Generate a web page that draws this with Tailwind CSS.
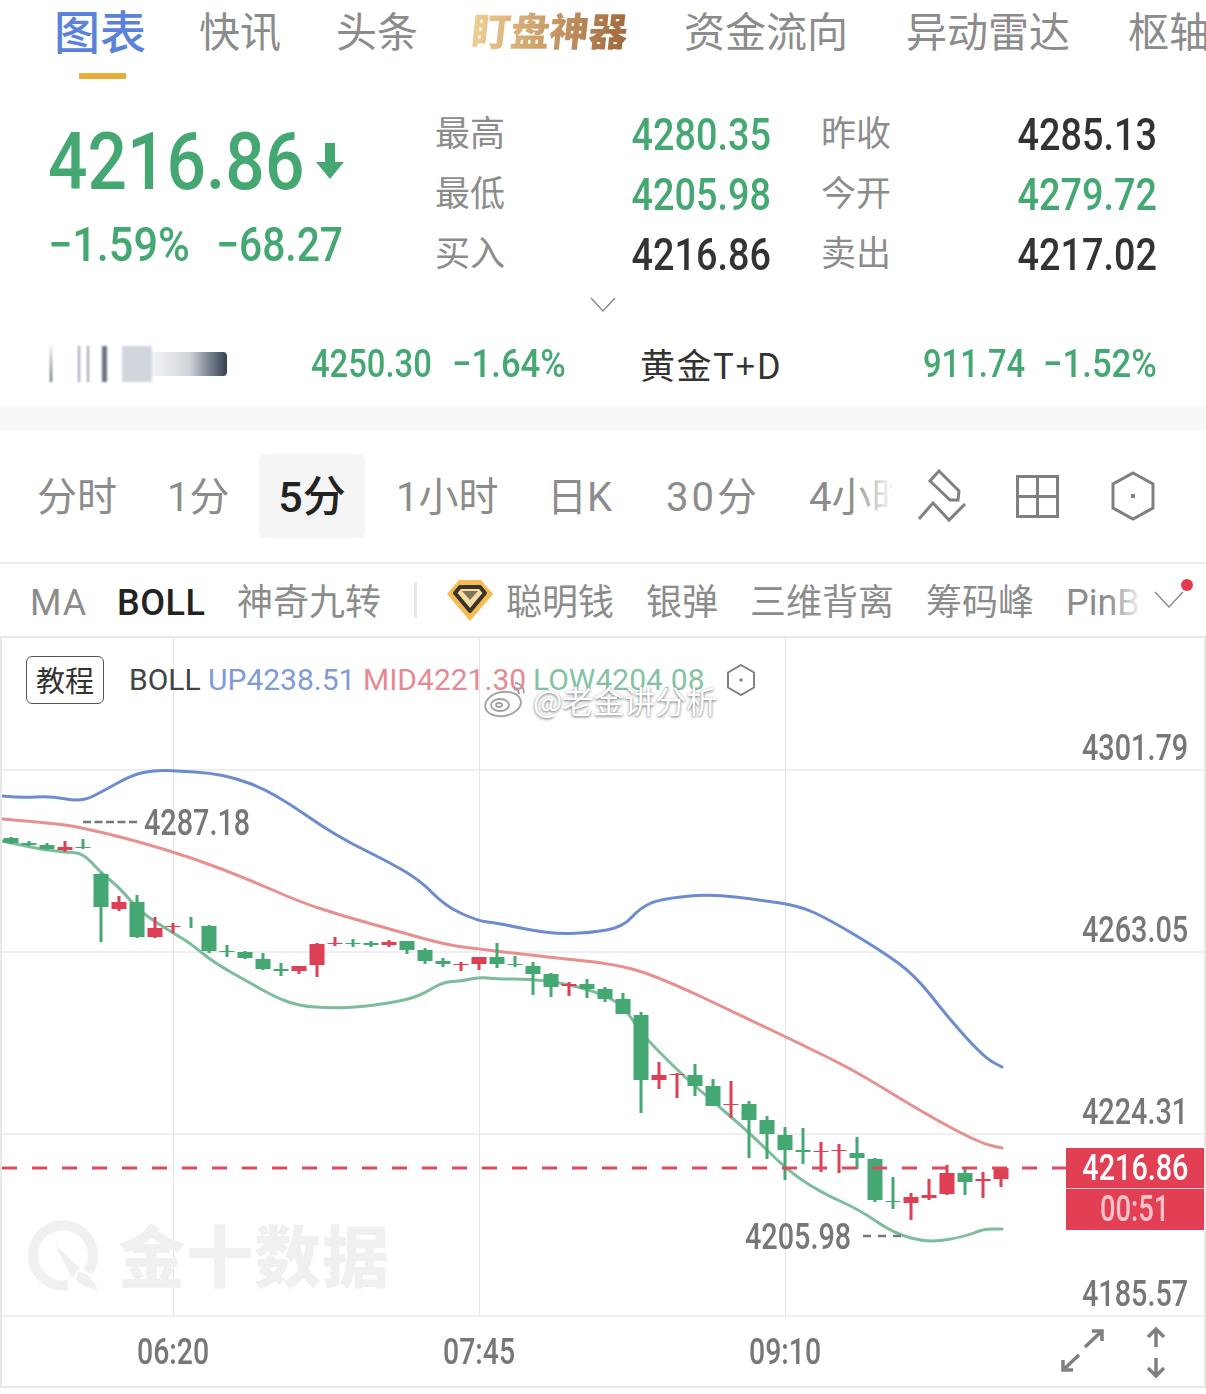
<!DOCTYPE html>
<html lang="zh-CN">
<head>
  <meta charset="UTF-8" />
  <meta name="viewport" content="width=device-width, initial-scale=1" />
  <title>Gold chart</title>
  <script src="https://cdn.jsdelivr.net/npm/@tailwindcss/browser@4"></script>
</head>
<body class="bg-white font-['Noto_Sans_CJK_SC','Noto_Sans',sans-serif] text-[#858585] w-[1206px] h-[1394px] overflow-hidden">

  <!-- Top tabs -->
  <nav class="h-[96px] pl-[54px] flex items-start pt-[2px] whitespace-nowrap overflow-hidden text-[41px] leading-[54px] text-[#8c8c8c]">
    <div class="relative w-[145px] shrink-0">
      <span class="text-[46px] font-medium text-[#5a82d8]">图表</span>
      <div class="absolute left-[25px] top-[71px] w-[47px] h-[6px] bg-[#e8ae3a]"></div>
    </div>
    <span class="w-[137px] shrink-0">快讯</span>
    <span class="w-[136px] shrink-0">头条</span>
    <span class="w-[155px] mr-[57px] shrink-0 text-[39px] font-black -skew-x-6 bg-linear-to-r from-[#efcf94] to-[#a2683c] bg-clip-text text-transparent">盯盘神器</span>
    <span class="w-[222px] shrink-0">资金流向</span>
    <span class="w-[222px] shrink-0">异动雷达</span>
    <span class="shrink-0">枢轴点</span>
  </nav>

  <!-- Quote -->
  <section class="h-[190px] flex pl-[50px] pt-[7px] text-[#45a873] font-['Roboto',sans-serif] font-medium">
    <div class="w-[385px] shrink-0">
      <div class="mt-[23px] h-[72px] flex items-center">
        <span class="ml-[-2px] w-[257px] text-[79px] leading-[72px] scale-x-[0.88] origin-left whitespace-nowrap">4216.86</span>
        <svg class="ml-[11px] mt-[-2px]" width="28" height="36" viewBox="0 0 28 36"><path d="M9 0h10v19h9L14 36 0 19h9z" fill="#45a873"/></svg>
      </div>
      <div class="mt-[25px] h-[44px] flex items-center text-[48px] whitespace-nowrap">
        <span class="ml-[-2px] w-[168px] shrink-0 scale-x-[0.9] origin-left">−1.59%</span><span class="scale-x-[0.85] origin-left">−68.27</span>
      </div>
    </div>
    <div class="grid grid-cols-[336px_336px] gap-x-[50px] auto-rows-[60px] items-center text-[45px]">
      <div class="flex justify-between items-center"><span class="mb-[4px] font-['Noto_Sans_CJK_SC'] font-normal text-[35px] text-[#8c8c8c]">最高</span><span class="mt-[4px] scale-x-[0.84] origin-right">4280.35</span></div>
      <div class="flex justify-between items-center"><span class="mb-[4px] font-['Noto_Sans_CJK_SC'] font-normal text-[35px] text-[#8c8c8c]">昨收</span><span class="mt-[4px] scale-x-[0.84] origin-right text-[#333333]">4285.13</span></div>
      <div class="flex justify-between items-center"><span class="mb-[4px] font-['Noto_Sans_CJK_SC'] font-normal text-[35px] text-[#8c8c8c]">最低</span><span class="mt-[4px] scale-x-[0.84] origin-right">4205.98</span></div>
      <div class="flex justify-between items-center"><span class="mb-[4px] font-['Noto_Sans_CJK_SC'] font-normal text-[35px] text-[#8c8c8c]">今开</span><span class="mt-[4px] scale-x-[0.84] origin-right">4279.72</span></div>
      <div class="flex justify-between items-center"><span class="mb-[4px] font-['Noto_Sans_CJK_SC'] font-normal text-[35px] text-[#8c8c8c]">买入</span><span class="mt-[4px] scale-x-[0.84] origin-right text-[#333333]">4216.86</span></div>
      <div class="flex justify-between items-center"><span class="mb-[4px] font-['Noto_Sans_CJK_SC'] font-normal text-[35px] text-[#8c8c8c]">卖出</span><span class="mt-[4px] scale-x-[0.84] origin-right text-[#333333]">4217.02</span></div>
    </div>
  </section>

  <!-- Chevron -->
  <div class="h-[48px] pl-[590px] pt-[11px]">
    <svg width="26" height="16" viewBox="0 0 26 16"><path d="M1 1l12 13L25 1" fill="none" stroke="#8a8a8a" stroke-width="1.5"/></svg>
  </div>

  <!-- Related quotes -->
  <div class="h-[72px] flex items-start pt-[12px] text-[#45a873] font-['Roboto',sans-serif] font-medium text-[39px] leading-[36px] whitespace-nowrap">
    <div class="ml-[50px] w-[180px] h-[36px] flex shrink-0">
      <div class="w-[2px] bg-linear-to-b from-gray-200 to-gray-600 blur-[1px]"></div>
      <div class="ml-[26px] w-[2px] bg-gray-400 blur-[1px]"></div>
      <div class="ml-[7px] w-[2px] bg-gray-400 blur-[1px]"></div>
      <div class="ml-[13px] w-[5px] bg-gray-500 blur-[1px]"></div>
      <div class="ml-[15px] w-[30px] bg-gray-300 blur-[1px]"></div>
      <div class="w-[75px] my-[6px] bg-linear-to-r from-gray-100 via-gray-300 to-gray-700 rounded-r-[4px]"></div>
    </div>
    <span class="ml-[81px] w-[141px] shrink-0 scale-x-[0.84] origin-left">4250.30</span>
    <span class="w-[188px] shrink-0 scale-x-[0.89] origin-left">−1.64%</span>
    <span class="w-[283px] shrink-0 font-['Noto_Sans_CJK_SC','Roboto'] font-normal text-[#333333] text-[35px] tracking-[1.5px]">黄金T+D</span>
    <span class="w-[120px] shrink-0 scale-x-[0.84] origin-left">911.74</span>
    <span class="scale-x-[0.89] origin-left">−1.52%</span>
  </div>

  <div class="h-[24px] bg-[#f7f7f7]"></div>

  <!-- Timeframes -->
  <div class="relative h-[134px] border-b-2 border-[#ececec] flex items-center whitespace-nowrap text-[40px] font-['Roboto','Noto_Sans_CJK_SC',sans-serif] text-[#8c8c8c]">
    <span class="mt-[3px] ml-[37px] w-[130px] shrink-0">分时</span>
    <span class="mt-[3px] w-[92px] shrink-0">1分</span>
    <span class="w-[106px] h-[84px] shrink-0 pt-[2px] flex items-center justify-center bg-[#f5f5f5] rounded-[6px] text-[#222222] text-[43px] font-medium">5分</span>
    <span class="mt-[3px] ml-[31px] w-[151px] shrink-0">1小时</span>
    <span class="mt-[3px] w-[119px] shrink-0">日K</span>
    <span class="mt-[3px] w-[143px] shrink-0 tracking-[3px]">30分</span>
    <span class="mt-[3px] w-[84px] shrink-0 overflow-hidden">4小时</span>
    <div class="absolute left-[850px] top-0 w-[45px] h-full bg-linear-to-r from-transparent to-white"></div>
    <svg class="ml-[24px] shrink-0" width="50" height="54" viewBox="917 468 50 54" fill="none" stroke="#808080" stroke-width="3">
      <path d="M939 470L930 480L950 499L958 499L959 490z"/>
      <path d="M919 518L933 502L949 519L965 503"/>
    </svg>
    <svg class="ml-[49px] shrink-0" width="43" height="43" viewBox="0 0 43 43" fill="none" stroke="#808080" stroke-width="3"><path d="M1.500 1.500h40v40h-40zM21.500 1.500v40M1.500 21.500h40"/></svg>
    <svg class="ml-[52px] shrink-0" width="44" height="50" viewBox="0 0 44 50" fill="none" stroke="#808080" stroke-width="3"><path d="M22 2l20 11v24L22 48 2 37V13z"/><rect x="20" y="23" width="4" height="4" fill="#808080" stroke="none"/></svg>
  </div>

  <!-- Indicators -->
  <div class="relative h-[74px] border-b-2 border-[#e8e8e8] flex items-center whitespace-nowrap text-[36px] font-['Roboto','Noto_Sans_CJK_SC',sans-serif] text-[#8c8c8c]">
    <span class="mt-[6px] ml-[30px] w-[87px] shrink-0 tracking-[1px]">MA</span>
    <span class="mt-[6px] w-[120px] shrink-0 font-medium tracking-[0.5px] text-[#222222]">BOLL</span>
    <span class="mt-[6px] w-[177px] shrink-0">神奇九转</span>
    <div class="w-[3px] h-[36px] bg-[#e8e8e8] shrink-0"></div>
    <svg class="ml-[30px] shrink-0" width="46" height="41" viewBox="0 0 46 41">
      <path d="M12 0h22l12 14-23 27L0 14z" fill="#f3bb52"/>
      <path d="M13 7h20l5 6-15 18L8 13z" fill="#f6dca0" stroke="#3a3328" stroke-width="4" stroke-linejoin="round"/>
      <path d="M15 11h16l-8 9z" fill="#7d7460"/>
    </svg>
    <span class="mt-[6px] ml-[13px] w-[140px] shrink-0">聪明钱</span>
    <span class="mt-[6px] w-[104px] shrink-0">银弹</span>
    <span class="mt-[6px] w-[176px] shrink-0">三维背离</span>
    <span class="mt-[6px] w-[140px] shrink-0">筹码峰</span>
    <span class="mt-[6px] w-[74px] shrink-0 overflow-hidden">PinBar</span>
    <div class="absolute left-[1108px] top-0 w-[36px] h-full bg-linear-to-r from-transparent to-white"></div>
    <svg class="ml-[14px] shrink-0" width="30" height="18" viewBox="0 0 30 18"><path d="M1 1l14 15L29 1" fill="none" stroke="#8a8a8a" stroke-width="1.5"/></svg>
    <div class="absolute left-[1181px] top-[15px] w-[12px] h-[12px] rounded-full bg-[#e23b50]"></div>
  </div>

  <!-- Chart -->
  <div class="relative h-[750px] border-x-2 border-[#e8e8e8] border-b-2 font-['Roboto',sans-serif] font-medium text-[#777777] overflow-hidden">
    <svg id="chart" class="absolute left-[-2px] top-0" width="1206" height="750" viewBox="0 638 1206 750" fill="none">
      <path d="M2 770H1204M2 952H1204M2 1134H1204M2 1316H1204" stroke="#efefef" stroke-width="2"/>
      <path d="M173.500 638V1316M479.500 638V1316M785.500 638V1316" stroke="#e4e4e4"/>
      <!-- watermark logo -->
      <path d="M88 1272A30 30 0 1 0 68 1285" stroke="#f0f0f0" stroke-width="10"/>
      <path d="M55 1245L80 1268L72 1278z" fill="#f0f0f0"/>
      <path d="M78 1272Q90 1272 98 1290Q80 1286 76 1280z" fill="#f0f0f0"/>
      <g id="lines" stroke-width="3" stroke-linejoin="round" stroke-linecap="round"></g>
      <g id="candles"></g>
      <path d="M2 1168H1066" stroke="#dd4a5d" stroke-width="3" stroke-dasharray="15 15"/>
      <path d="M83 822H138" stroke="#777777" stroke-width="2.500" stroke-dasharray="8 3.500"/>
      <path d="M863 1236H905" stroke="#777777" stroke-width="2.500" stroke-dasharray="8 7"/>
      <!-- bottom icons -->
      <g stroke="#808080" stroke-width="3.500">
        <path d="M1085 1347l17-16M1092 1331h10v10M1079 1355l-16 15M1063 1360v10h10"/>
        <path d="M1156 1329v18M1148 1337l8-8 8 8M1156 1358v18M1148 1368l8 8 8-8"/>
      </g>
    </svg>

    <!-- BOLL legend -->
    <div class="absolute left-[24px] top-[18px] w-[78px] h-[48px] border border-[#555555] rounded-[6px] flex items-center justify-center font-['Noto_Sans_CJK_SC'] font-normal text-[29px] text-[#333333]">教程</div>
    <div class="absolute left-[127px] top-[20px] flex items-center h-[42px] whitespace-nowrap font-['Roboto'] font-normal text-[30px]">
      <span class="w-[79px] text-[#444444]">BOLL</span>
      <span class="w-[155px] text-[#7f9bd3]">UP4238.51</span>
      <span class="w-[170px] text-[#e58a92]">MID4221.30</span>
      <span class="w-[194px] text-[#84c2a3]">LOW4204.08</span>
      <svg class="mt-[2px]" width="28" height="32" viewBox="0 0 28 32" fill="none" stroke="#808080" stroke-width="2"><path d="M14 1l13 7.500v15L14 31 1 23.500v-15z"/><rect x="12.500" y="14.500" width="3" height="3" fill="#808080" stroke="none"/></svg>
    </div>

    <!-- weibo watermark -->
    <svg class="absolute left-[481px] top-[40px]" width="46" height="40" viewBox="0 0 46 40" fill="none" stroke="#a0a0a0" stroke-width="1.800">
      <ellipse cx="20" cy="26" rx="18" ry="12" transform="rotate(-10 20 26)" fill="#ffffff"/>
      <ellipse cx="17" cy="27" rx="9" ry="6" fill="#ffffff"/>
      <ellipse cx="16" cy="27" rx="3" ry="2"/>
      <path d="M32 5c5 0 9 4 9 10M31 11c3 0 5 2 5 5"/>
    </svg>
    <div class="absolute left-[531px] top-[40px] h-[44px] leading-[44px] whitespace-nowrap font-['Noto_Sans_CJK_SC'] font-normal text-[31px] text-white [text-shadow:0_1px_3px_#666666]">@老金讲分析</div>

    <!-- price labels -->
    <span class="absolute left-[1080px] top-[90px] text-[36px] leading-[40px] scale-x-[0.8] origin-left">4301.79</span>
    <span class="absolute left-[1080px] top-[272px] text-[36px] leading-[40px] scale-x-[0.8] origin-left">4263.05</span>
    <span class="absolute left-[1080px] top-[454px] text-[36px] leading-[40px] scale-x-[0.8] origin-left">4224.31</span>
    <span class="absolute left-[1080px] top-[636px] text-[36px] leading-[40px] scale-x-[0.8] origin-left">4185.57</span>
    <span class="absolute left-[142px] top-[165px] text-[36px] leading-[40px] scale-x-[0.8] origin-left">4287.18</span>
    <span class="absolute left-[743px] top-[579px] text-[36px] leading-[40px] scale-x-[0.8] origin-left">4205.98</span>

    <!-- current price tag -->
    <div class="absolute left-[1064px] top-[510px] w-[138px] h-[82px] bg-[#e23f55] flex flex-col text-[36px]">
      <div class="h-[41px] leading-[41px] text-center text-white border-b border-white/70"><span class="inline-block scale-x-[0.8]">4216.86</span></div>
      <div class="h-[41px] leading-[41px] text-center text-[#f9c3ca]"><span class="inline-block scale-x-[0.76]">00:51</span></div>
    </div>

    <!-- time axis -->
    <span class="absolute left-[135px] top-[694px] text-[36px] leading-[40px] scale-x-[0.79] origin-left">06:20</span>
    <span class="absolute left-[441px] top-[694px] text-[36px] leading-[40px] scale-x-[0.79] origin-left">07:45</span>
    <span class="absolute left-[747px] top-[694px] text-[36px] leading-[40px] scale-x-[0.79] origin-left">09:10</span>

    <!-- big watermark -->
    <span class="absolute left-[116px] top-[570px] text-[67px] leading-[90px] font-['Noto_Sans_CJK_SC'] font-black tracking-[1px] text-[#f0f0f0]">金十数据</span>
  </div>

  <script>
    const blue = [[2,796],[22,798],[50,796],[82,802],[105,790],[132,775],[155,770],[180,771],[210,773],[235,778],[262,788],[290,804],[320,825],[350,843],[385,860],[420,880],[445,906],[478,921],[497,923],[550,934],[590,933],[623,927],[640,908],[660,899],[710,894],[760,900],[800,906],[830,920],[880,950],[915,975],[950,1020],[985,1058],[1002,1067]];
    const red = [[3,819],[60,824],[83,828],[133,840],[193,858],[250,880],[300,902],[340,915],[400,932],[447,945],[479,949],[547,957],[623,965],[670,982],[740,1015],[813,1050],[857,1072],[927,1115],[980,1143],[1002,1148]];
    const green = [[3,841],[33,848],[63,852],[83,853],[100,872],[120,888],[140,912],[173,933],[190,943],[213,962],[250,983],[277,998],[300,1006],[330,1008],[363,1007],[407,1000],[425,993],[443,982],[462,981],[480,977],[497,979],[530,979],[563,983],[597,992],[623,1005],[640,1032],[670,1063],[697,1088],[750,1133],[787,1170],[820,1192],[860,1210],[893,1233],[929,1243],[967,1236],[983,1229],[1002,1229]];
    // rounds the corners: each point is a control point, the curve passes the midpoints
    const toPath = pts => {
      let d = `M${pts[0][0]} ${pts[0][1]}`;
      for (let i = 1; i < pts.length - 1; i++) {
        const mx = (pts[i][0] + pts[i + 1][0]) / 2, my = (pts[i][1] + pts[i + 1][1]) / 2;
        d += `Q${pts[i][0]} ${pts[i][1]} ${mx} ${my}`;
      }
      const last = pts[pts.length - 1];
      return d + `L${last[0]} ${last[1]}`;
    };
    document.getElementById('lines').innerHTML =
      `<path d="${toPath(blue)}" stroke="#6c8ccf"/><path d="${toPath(red)}" stroke="#e88f8f"/><path d="${toPath(green)}" stroke="#7dbd9c"/>`;

    // g = green, r = red: body top, body bottom, wick top, wick bottom
    const candles = [
      ['g',838,843,837,844],['g',843,845,841,846],['g',845,849,843,850],['r',847,850,841,852],['g',847,848,839,849],
      ['g',874,907,873,942],['r',902,909,896,911],['g',902,937,895,938],['r',928,937,917,938],['r',926,927,923,933],
      ['g',917,917,917,928],['g',926,951,925,953],['g',951,952,945,957],['g',952,958,951,959],['g',959,969,953,970],
      ['g',969,971,963,976],['r',966,971,966,974],['r',944,965,943,977],['r',943,944,937,946],['g',943,944,939,947],
      ['g',943,945,941,947],['r',942,945,940,947],['g',941,950,941,954],['g',950,961,948,964],['g',961,964,958,967],
      ['r',964,965,962,971],['r',957,964,957,970],['g',957,964,943,968],['g',964,965,956,967],['g',966,974,962,995],
      ['g',974,987,973,997],['r',984,986,982,996],['g',984,989,979,998],['g',989,999,987,1002],['g',999,1014,993,1014],
      ['g',1015,1080,1012,1113],['r',1075,1080,1062,1089],['r',1074,1075,1073,1098],['g',1075,1086,1064,1096],['g',1086,1106,1079,1106],
      ['r',1104,1105,1081,1118],['g',1104,1120,1101,1158],['g',1120,1134,1116,1159],['g',1135,1150,1127,1180],['g',1150,1152,1128,1164],
      ['r',1151,1152,1142,1172],['r',1150,1151,1144,1173],['g',1153,1158,1137,1169],['g',1159,1200,1158,1202],['g',1201,1202,1177,1209],
      ['r',1197,1203,1193,1220],['r',1195,1198,1179,1200],['r',1173,1194,1165,1195],['g',1173,1182,1167,1195],['r',1179,1181,1172,1198],
      ['r',1168,1179,1168,1187]
    ];
    document.getElementById('candles').innerHTML = candles.map((c, i) => {
      const x = 11 + i * 18, fill = c[0] === 'g' ? '#45a873' : '#dd3f55';
      return `<rect x="${x - 1.5}" y="${c[3]}" width="3" height="${c[4] - c[3]}" fill="${fill}"/>` +
        (c[2] > c[1] ? `<rect x="${x - 7.5}" y="${c[1]}" width="15" height="${c[2] - c[1]}" fill="${fill}"/>` : '');
    }).join('');
  </script>
</body>
</html>
